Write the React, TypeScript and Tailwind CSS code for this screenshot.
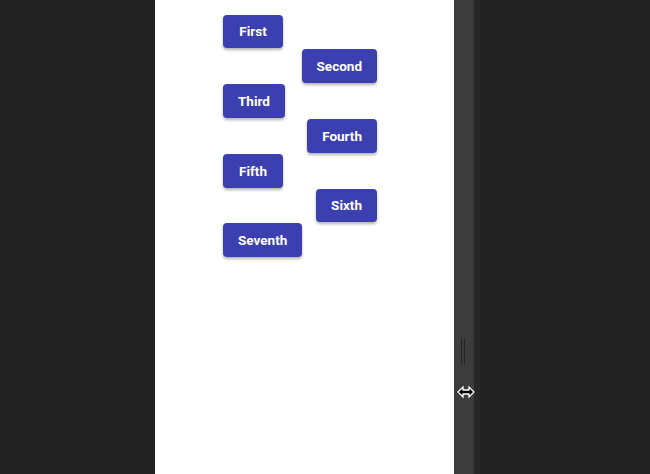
const items = ["First", "Second", "Third", "Fourth", "Fifth", "Sixth", "Seventh"];

export default function App() {
  return (
    <div className="flex h-[474px] w-[650px] bg-[#222222]" style={{ fontFamily: "Roboto, 'Liberation Sans', sans-serif" }}>
      <div className="w-[155px] shrink-0" />
      <div className="w-[299px] shrink-0 bg-white pl-[68px] pt-[14.6px]">
        <div className="flex w-[154px] flex-col gap-px">
          {items.map((label, i) => (
            <button
              key={label}
              className={
                "h-[33.8px] min-w-[60px] rounded-[4px] bg-[#3b3fb0] px-[15px] text-[13.5px] font-bold text-white shadow-[0_2px_3px_rgba(0,0,0,0.3)] " +
                (i % 2 === 0 ? "self-start" : "self-end")
              }
            >
              {label}
            </button>
          ))}
        </div>
      </div>
      <div className="relative w-[20px] shrink-0 bg-[#3c3c3c]">
        <div className="absolute left-[7px] top-[338px] flex h-[27px] gap-[2px]">
          <div className="w-px bg-[#242424]" />
          <div className="w-px bg-[#242424]" />
        </div>
      </div>
      <div className="flex-1 bg-[#222222]">
        <div className="h-full w-[6px] bg-[#272727]" />
      </div>
      <svg className="absolute left-[457px] top-[385px]" width="18" height="14" viewBox="0 0 18 14">
        <path d="M1 7 L6 2 L6 5 L12 5 L12 2 L17 7 L12 12 L12 9 L6 9 L6 12 Z" fill="#000" stroke="#fff" strokeWidth="1.3" strokeLinejoin="miter" />
      </svg>
    </div>
  );
}
